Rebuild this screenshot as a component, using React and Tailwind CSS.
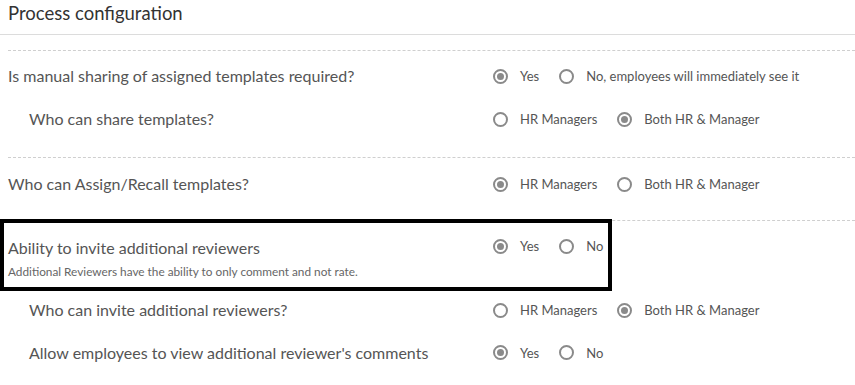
import React from 'react';

function Radio({ checked, label }) {
    return (
        <div className="flex items-center h-[20px]">
            <span className="w-[15px] h-[15px] rounded-full border-2 border-[#8a8a8a] flex items-center justify-center shrink-0">
                {checked && <span className="w-[7px] h-[7px] rounded-full bg-[#8a8a8a]" />}
            </span>
            <span className="ml-[12px] text-[13px] text-[#555] leading-[20px] whitespace-nowrap">{label}</span>
        </div>
    );
}

function Options({ items, value }) {
    return (
        <div className="flex items-center gap-[20px]">
            {items.map((item) => (
                <Radio key={item} label={item} checked={item === value} />
            ))}
        </div>
    );
}

const YES_NO_LONG = ['Yes', 'No, employees will immediately see it'];
const WHO = ['HR Managers', 'Both HR & Manager'];
const YES_NO = ['Yes', 'No'];

function Row({ label, indent, height, children }) {
    return (
        <div className={`flex items-center ${height}`}>
            <div className={`w-[493px] shrink-0 text-[16px] text-[#555] leading-[20px] ${indent ? 'pl-[29px]' : 'pl-[8px]'}`}>
                {label}
            </div>
            {children}
        </div>
    );
}

export default function App() {
    return (
        <div className="w-[855px] h-[385px] bg-white overflow-hidden" style={{ fontFamily: 'Lato, "Open Sans", sans-serif' }}>
            <div className="h-[35px] border-b border-[#dcdcdc] pl-[8px] pt-[1px]">
                <h2 className="text-[18.5px] leading-[24px] text-[#333]">Process configuration</h2>
            </div>

            <div className="mt-[15px] ml-[8px] border-t border-dashed border-[#cfcfcf]" />
            <div className="pb-[20px]">
                <Row label="Is manual sharing of assigned templates required?" height="h-[50px]">
                    <Options items={YES_NO_LONG} value="Yes" />
                </Row>
                <Row label="Who can share templates?" indent height="h-[36px]">
                    <Options items={WHO} value="Both HR & Manager" />
                </Row>
            </div>

            <div className="ml-[8px] border-t border-dashed border-[#cfcfcf]" />
            <div className="pb-[10px]">
                <Row label="Who can Assign/Recall templates?" height="h-[52px]">
                    <Options items={WHO} value="HR Managers" />
                </Row>
            </div>

            <div className="relative">
                <div className="ml-[8px] border-t border-dashed border-[#cfcfcf]" />
                <div className="flex items-start h-[68px]">
                    <div className="w-[493px] shrink-0 pl-[8px] pt-[17px]">
                        <div className="text-[16px] leading-[20px] text-[#555]">Ability to invite additional reviewers</div>
                        <div className="mt-[7px] text-[11.8px] leading-[14px] text-[#666]">
                            Additional Reviewers have the ability to only comment and not rate.
                        </div>
                    </div>
                    <div className="pt-[15px]">
                        <Options items={YES_NO} value="Yes" />
                    </div>
                </div>
                <div className="absolute left-0 top-[-1px] w-[612px] h-[72px] border-4 border-black" />
            </div>

            <Row label="Who can invite additional reviewers?" indent height="h-[42px]">
                <Options items={WHO} value="Both HR & Manager" />
            </Row>
            <Row label="Allow employees to view additional reviewer's comments" indent height="h-[43px]">
                <Options items={YES_NO} value="Yes" />
            </Row>
        </div>
    );
}
